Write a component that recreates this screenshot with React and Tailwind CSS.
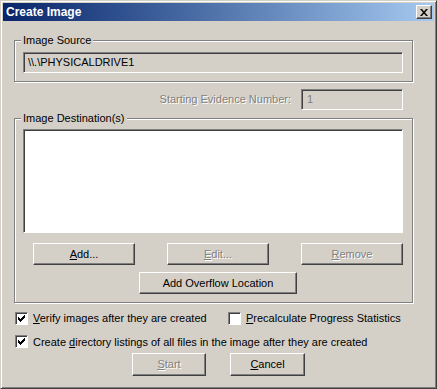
import React from "react";

const font = { fontFamily: '"Liberation Sans", Arial, sans-serif' };

const Raised = ({ children, disabled, className = "" }) => (
  <button
    className={`h-[22px] border border-t-white border-l-white border-r-[#404040] border-b-[#404040] bg-[#d4d0c8] shadow-[inset_-1px_-1px_0_#808080] text-[11px] flex items-center justify-center ${
      disabled ? "text-[#808080] [text-shadow:1px_1px_0_#fff]" : "text-black"
    } ${className}`}
  >
    {children}
  </button>
);

const Group = ({ label, className = "", children }) => (
  <div
    className={`relative border border-[#808080] shadow-[inset_1px_1px_0_#fff,1px_1px_0_#fff] ${className}`}
  >
    <span className="absolute -top-[7px] left-[6px] bg-[#d4d0c8] px-[2px] text-[11px] leading-[13px] text-black">
      {label}
    </span>
    {children}
  </div>
);

const Check = ({ checked }) => (
  <span className="w-[13px] h-[13px] shrink-0 bg-white border border-t-[#808080] border-l-[#808080] border-r-white border-b-white shadow-[inset_1px_1px_0_#404040] flex items-center justify-center">
    {checked && (
      <svg width="7" height="7" viewBox="0 0 7 7">
        <path d="M0 2h1v1h1v1h1V3h1V2h1V1h1V0h1v3H6v1H5v1H4v1H3v1H2V6H1V5H0z" fill="#000" />
      </svg>
    )}
  </span>
);

export default function App() {
  return (
    <div
      style={font}
      className="w-[437px] h-[389px] bg-[#d4d0c8] border border-t-[#d4d0c8] border-l-[#d4d0c8] border-r-[#404040] border-b-[#404040] shadow-[inset_1px_1px_0_#fff,inset_-1px_-1px_0_#808080] p-[2px] flex flex-col"
    >
      <div className="h-[18px] bg-gradient-to-r from-[#0a246a] to-[#a6caf0] flex items-center justify-between pl-[3px] pr-[2px]">
        <span className="text-white font-bold text-[12px] leading-none">Create Image</span>
        <span className="w-[16px] h-[14px] bg-[#d4d0c8] border border-t-white border-l-white border-r-[#404040] border-b-[#404040] shadow-[inset_-1px_-1px_0_#808080] flex items-center justify-center">
          <svg width="8" height="7" viewBox="0 0 8 7">
            <path d="M0 0h2l2 2.5L6 0h2L5 3.5 8 7H6L4 4.5 2 7H0l3-3.5z" fill="#000" />
          </svg>
        </span>
      </div>

      <div className="pl-[11px] pr-[21px] flex flex-col">
        <Group label="Image Source" className="mt-[19px] h-[42px] pl-[8px] pr-[9px] pt-[11px]">
          <div className="h-[21px] bg-[#d4d0c8] border border-t-[#808080] border-l-[#808080] border-r-white border-b-white shadow-[inset_1px_1px_0_#404040] flex items-center pl-[4px] text-[11px] text-black">
            \\.\PHYSICALDRIVE1
          </div>
        </Group>

        <div className="mt-[7px] flex items-center justify-end gap-[10px] pr-[10px]">
          <span className="text-[11px] text-[#808080] [text-shadow:1px_1px_0_#fff]">Starting Evidence Number:</span>
          <div className="w-[102px] h-[21px] bg-[#d4d0c8] border border-t-[#808080] border-l-[#808080] border-r-white border-b-white shadow-[inset_1px_1px_0_#404040] flex items-center pl-[5px] text-[11px] text-[#808080]">
            1
          </div>
        </div>

        <Group label="Image Destination(s)" className="mt-[8px] h-[185px] pl-[8px] pr-[9px] pt-[10px] flex flex-col">
          <div className="h-[104px] bg-white border border-t-[#808080] border-l-[#808080] border-r-white border-b-white shadow-[inset_1px_1px_0_#404040]" />
          <div className="mt-[10px] flex justify-between pl-[10px]">
            <Raised className="w-[102px]">
              <span><u>A</u>dd...</span>
            </Raised>
            <Raised className="w-[102px]" disabled>
              <span><u>E</u>dit...</span>
            </Raised>
            <Raised className="w-[102px]" disabled>
              <span><u>R</u>emove</span>
            </Raised>
          </div>
          <div className="mt-[7px] flex justify-center pl-[10px]">
            <Raised className="w-[158px]">Add Overflow Location</Raised>
          </div>
        </Group>

        <div className="mt-[7px] flex items-center gap-[5px] text-[11px] text-black pl-[1px]">
          <Check checked />
          <span className="w-[190px]"><u>V</u>erify images after they are created</span>
          <Check />
          <span><u>P</u>recalculate Progress Statistics</span>
        </div>
        <div className="mt-[7px] flex items-center gap-[5px] text-[11px] text-black pl-[1px]">
          <Check checked />
          <span>Create <u>d</u>irectory listings of all files in the image after they are created</span>
        </div>

        <div className="mt-[3px] flex justify-center gap-[24px] pl-[10px]">
          <Raised className="w-[74px] h-[23px]" disabled>
            <span><u>S</u>tart</span>
          </Raised>
          <Raised className="w-[75px] h-[23px]">
            <span><u>C</u>ancel</span>
          </Raised>
        </div>
      </div>
    </div>
  );
}
